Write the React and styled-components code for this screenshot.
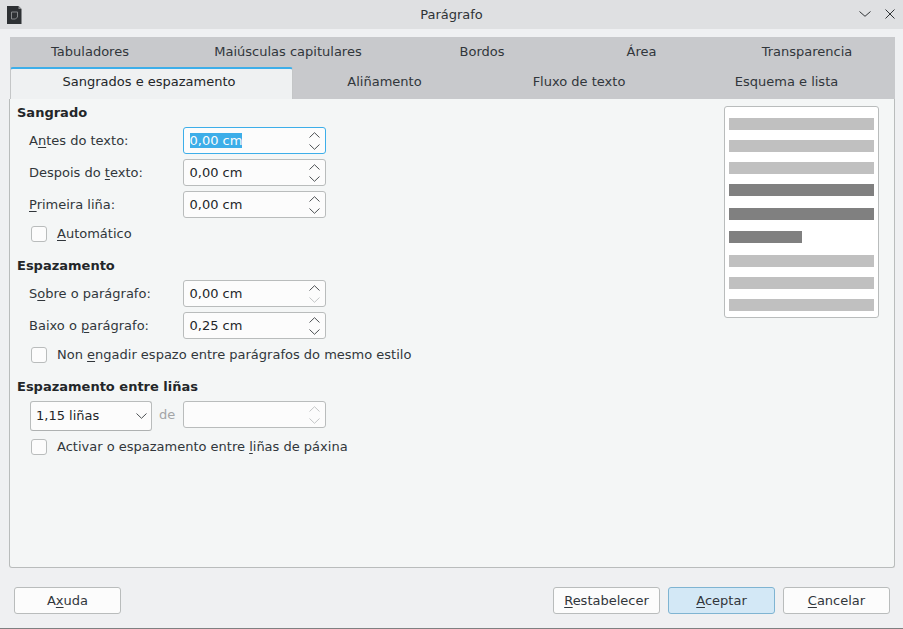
import React from "react";
import styled, { createGlobalStyle } from "styled-components";

const Global = createGlobalStyle`
  html, body { margin: 0; padding: 0; background: #eff0f2; }
  * { box-sizing: border-box; }
  u { text-underline-offset: 2px; text-decoration-thickness: 1px; }
`;

const Window = styled.div`
  position: relative;
  width: 903px;
  height: 629px;
  overflow: hidden;
  display: flex;
  flex-direction: column;
  background: #eff0f2;
  border-bottom: 1px solid #7f8081;
  font: 13px/16px "DejaVu Sans", sans-serif;
  color: #232629;
`;

const TitleBar = styled.header`
  height: 29px;
  flex: none;
  display: grid;
  grid-template-columns: 1fr auto 1fr;
  align-items: center;
  padding: 0 7px;
  background: #dfe0e2;
  color: #2f3336;
`;

const WindowButtons = styled.div`
  display: flex;
  justify-content: flex-end;
  align-items: center;
  gap: 14px;
  padding: 0 1px 1px 0;
`;

const Tabs = styled.div`
  margin: 8px 8px 0 10px;
  flex: none;
  background: #c8c9cc;
`;

const TabRow = styled.div`
  display: grid;
  grid-template-columns: ${(p) => p.$cols};
  height: ${(p) => p.$height}px;
`;

const Tab = styled.div`
  display: flex;
  justify-content: center;
  align-items: center;
  padding-right: ${(p) => p.$right || 0}px;
  padding-bottom: ${(p) => p.$bottom || 0}px;
  color: #31363b;
  ${(p) =>
    p.$active &&
    `
    background: #eff1f2;
    border-top: 2px solid #3daee9;
    border-left: 1px solid #c4c6c7;
    border-right: 1px solid #c4c6c7;
    border-radius: 3px 3px 0 0;
    color: #232629;
  `}
`;

const Panel = styled.main`
  margin: 0 8px 0 9px;
  height: 469px;
  flex: none;
  position: relative;
  display: flex;
  justify-content: space-between;
  padding: 6px 15px 0 7px;
  background: #f4f6f6;
  border: 1px solid #b9bcbc;
  border-top: none;
  border-radius: 0 0 3px 3px;
`;

const Form = styled.div`
  display: flex;
  flex-direction: column;
`;

const Heading = styled.h2`
  margin: ${(p) => p.$top || 0}px 0 6px;
  font: bold 13px/16px "DejaVu Sans", sans-serif;
  color: #232629;
`;

const FieldRow = styled.div`
  display: flex;
  align-items: center;
  height: 27px;
  margin-bottom: 5px;
  padding-left: 12px;
`;

const FieldLabel = styled.label`
  width: 154px;
  color: #31363b;
`;

const SpinBox = styled.div`
  width: 143px;
  height: 27px;
  display: flex;
  align-items: center;
  justify-content: space-between;
  padding: 0 5px 0 5.5px;
  background: #fcfcfc;
  border: 1px solid ${(p) => (p.$focus ? "#3daee9" : "#b9bcbc")};
  border-radius: 3px;
  color: #232629;
`;

const Selected = styled.span`
  background: #3daee9;
  color: #fcfcfc;
  line-height: 15px;
`;

const Arrows = styled.span`
  display: flex;
  flex-direction: column;
  gap: 6px;
`;

const CheckRow = styled.div`
  display: flex;
  align-items: center;
  gap: 10px;
  height: 16px;
  margin: ${(p) => p.$top || 0}px 0 0 14px;
  color: #31363b;
`;

const CheckBox = styled.span`
  width: 16px;
  height: 16px;
  flex: none;
  background: #fcfcfc;
  border: 1px solid #b9bcbc;
  border-radius: 3px;
`;

const LineRow = styled.div`
  display: flex;
  align-items: flex-start;
  margin-left: 13px;
`;

const Combo = styled.div`
  width: 122px;
  height: 30px;
  display: flex;
  align-items: center;
  justify-content: space-between;
  padding: 0 4px 0 5px;
  background: #fcfcfc;
  border: 1px solid #b9bcbc;
  border-bottom-color: #aeb1b1;
  border-radius: 3px;
`;

const Muted = styled.span`
  width: 31px;
  padding: 6px 0 0 7px;
  color: #a3a5a7;
`;

const Preview = styled.div`
  width: 155px;
  height: 212px;
  margin-top: 1px;
  padding: 11px 4px 0;
  background: #fff;
  border: 1px solid #b9bcbc;
  border-radius: 3px;
`;

const Bar = styled.div`
  height: 12px;
  width: ${(p) => (p.$short ? "73px" : "100%")};
  margin-bottom: ${(p) => p.$after}px;
  background: ${(p) => (p.$dark ? "#808080" : "#c0c0c0")};
`;

const Footer = styled.footer`
  display: flex;
  align-items: center;
  justify-content: space-between;
  flex: 1;
  padding: 5px 13px 0 14px;
`;

const ButtonGroup = styled.div`
  display: flex;
  gap: 8px;
`;

const Button = styled.button`
  width: 107px;
  height: 27px;
  padding: 0;
  background: ${(p) => (p.$primary ? "#d3e8f6" : "#fcfcfc")};
  border: 1px solid ${(p) => (p.$primary ? "#7fb4d2" : "#b9bcbc")};
  border-radius: 3px;
  font: 13px/16px "DejaVu Sans", sans-serif;
  color: #31363b;
`;

const Chevron = ({ up, w = 11, h = 6, color = "#4d5154" }) => (
  <svg width={w} height={h} viewBox="0 0 11 6" fill="none" stroke={color} strokeWidth="1">
    <path d={up ? "M.5 5.5 5.5.7l5 4.8" : "M.5.5l5 4.8 5-4.8"} />
  </svg>
);

const Spin = ({ value, focus, disabled, upOff, downOff }) => (
  <SpinBox $focus={focus}>
    <span>{focus ? <Selected>{value}</Selected> : value}</span>
    <Arrows>
      <Chevron up color={disabled || upOff ? "#c3c5c6" : "#4d5154"} />
      <Chevron color={disabled || downOff ? "#c3c5c6" : "#4d5154"} />
    </Arrows>
  </SpinBox>
);

const bars = [
  [10], [10], [10], [12, 1], [11, 1], [12, 1, 1], [10], [10], [0],
];

export default function App() {
  return (
    <Window>
      <Global />
      <TitleBar>
        <svg width="15" height="18" viewBox="0 0 15 18">
          <path d="M0 0h11.5L14.5 3v15H0z" fill="#2e3134" />
          <path d="M11.5 0 14.5 3h-3z" fill="#8a8c8e" />
          <path d="M4.5 6h6v5l-2 2h-4z" fill="none" stroke="#85888a" />
        </svg>
        <span>Parágrafo</span>
        <WindowButtons>
          <svg width="12" height="6" viewBox="0 0 12 6" fill="none" stroke="#2f3336">
            <path d="M.5.5l5.5 4.8 5.5-4.8" />
          </svg>
          <svg width="10" height="10" viewBox="0 0 10 10" fill="none" stroke="#2f3336">
            <path d="M.5.5l9 9M9.5.5l-9 9" />
          </svg>
        </WindowButtons>
      </TitleBar>

      <Tabs>
        <TabRow $height={30} $cols="160px 236px 152px 167px 170px">
          <Tab $bottom={1}>Tabuladores</Tab>
          <Tab $bottom={1}>Maiúsculas capitulares</Tab>
          <Tab $bottom={1}>Bordos</Tab>
          <Tab $bottom={1}>Área</Tab>
          <Tab $bottom={1} $right={6}>Transparencia</Tab>
        </TabRow>
        <TabRow $height={32} $cols="283px 183px 206px 213px">
          <Tab $active $bottom={5} $right={5}>Sangrados e espazamento</Tab>
          <Tab $bottom={3}>Aliñamento</Tab>
          <Tab $bottom={3}>Fluxo de texto</Tab>
          <Tab $bottom={3} $right={4}>Esquema e lista</Tab>
        </TabRow>
      </Tabs>

      <Panel>
        <Form>
          <Heading>Sangrado</Heading>
          <FieldRow>
            <FieldLabel>A<u>n</u>tes do texto:</FieldLabel>
            <Spin value="0,00 cm" focus />
          </FieldRow>
          <FieldRow>
            <FieldLabel>Despois do <u>t</u>exto:</FieldLabel>
            <Spin value="0,00 cm" />
          </FieldRow>
          <FieldRow>
            <FieldLabel><u>P</u>rimeira liña:</FieldLabel>
            <Spin value="0,00 cm" />
          </FieldRow>
          <CheckRow $top={3}><CheckBox /><span><u>A</u>utomático</span></CheckRow>

          <Heading $top={16}>Espazamento</Heading>
          <FieldRow>
            <FieldLabel>S<u>o</u>bre o parágrafo:</FieldLabel>
            <Spin value="0,00 cm" downOff />
          </FieldRow>
          <FieldRow>
            <FieldLabel>Baixo o <u>p</u>arágrafo:</FieldLabel>
            <Spin value="0,25 cm" />
          </FieldRow>
          <CheckRow $top={3}><CheckBox /><span>Non <u>e</u>ngadir espazo entre parágrafos do mesmo estilo</span></CheckRow>

          <Heading $top={16}>Espazamento entre liñas</Heading>
          <LineRow>
            <Combo><span>1,15 liñas</span><Chevron /></Combo>
            <Muted>de</Muted>
            <Spin value="" disabled />
          </LineRow>
          <CheckRow $top={8}><CheckBox /><span>Activar o espazamento entre <u>l</u>iñas de páxina</span></CheckRow>
        </Form>
        <Preview>
          {bars.map(([after, dark, short], i) => (
            <Bar key={i} $after={after} $dark={dark} $short={short} />
          ))}
        </Preview>
      </Panel>

      <Footer>
        <Button>A<u>x</u>uda</Button>
        <ButtonGroup>
          <Button><u>R</u>estabelecer</Button>
          <Button $primary><u>A</u>ceptar</Button>
          <Button><u>C</u>ancelar</Button>
        </ButtonGroup>
      </Footer>
    </Window>
  );
}
